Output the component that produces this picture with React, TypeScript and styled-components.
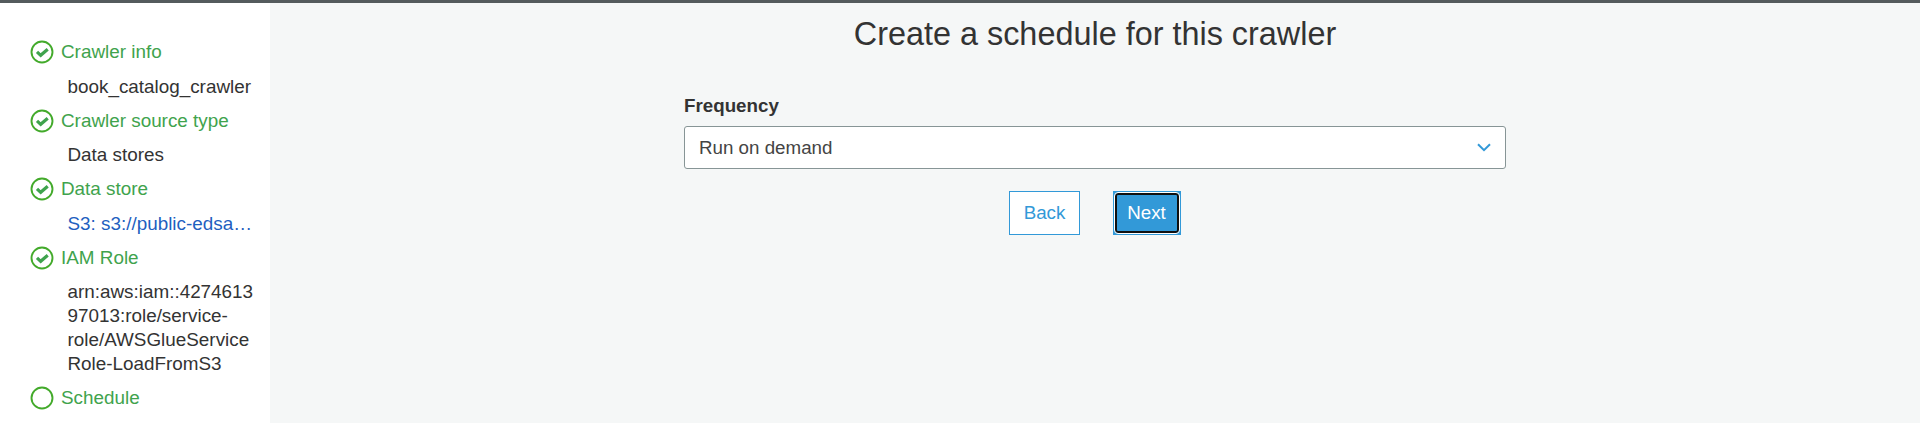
import React from 'react';
import styled, { createGlobalStyle, css } from 'styled-components';

const GlobalStyle = createGlobalStyle`
  * { box-sizing: border-box; }
  body {
    margin: 0;
    background: #f5f7f7;
    color: #333;
    font-family: "Liberation Sans", Arial, sans-serif;
    font-size: 18.75px;
    line-height: 24px;
  }
`;

const Page = styled.div`
  display: flex;
  height: 423px;
  overflow: hidden;
  border-top: 3px solid #545b5d;
`;

const Sidebar = styled.nav`
  flex: 0 0 270px;
  background: #fff;
  padding: 37.45px 0 0 30px;
  font-size: 18.86px;
`;

const Step = styled.section`
  margin-bottom: 10px;
`;

const StepTitle = styled.div`
  display: flex;
  align-items: center;
  gap: 7px;
  height: 24px;
  color: #3fa34d;
  white-space: nowrap;

  svg {
    flex: none;
  }
`;

const StepDetail = styled.div<{ $link?: boolean }>`
  width: 188px;
  margin: 10.4px 0 0 37.5px;
  color: ${({ $link }) => ($link ? '#1f5fbf' : '#333')};
  word-break: break-word;
  ${({ $link }) =>
    $link &&
    css`
      overflow: hidden;
      text-overflow: ellipsis;
      white-space: nowrap;
    `}
`;

const Main = styled.main`
  flex: 1;
  display: flex;
  flex-direction: column;
  align-items: center;
`;

const Heading = styled.h1`
  margin: 11px 0 0;
  font-size: 32.4px;
  line-height: 40px;
  font-weight: 400;
`;

const Field = styled.div`
  width: 822px;
  margin-top: 40px;
`;

const Label = styled.div`
  font-weight: 700;
  line-height: 24px;
`;

const Select = styled.div`
  display: flex;
  align-items: center;
  justify-content: space-between;
  height: 43px;
  margin-top: 8px;
  padding: 0 14px;
  background: #fff;
  border: 1px solid #879596;
  border-radius: 3px;
  color: #444;
`;

const Actions = styled.div`
  display: flex;
  gap: 33px;
  margin-top: 22px;
`;

const Button = styled.button`
  height: 44px;
  width: 71px;
  padding: 0 0 1px;
  border: 1px solid #3299d8;
  background: #fff;
  color: #3299d8;
  font: inherit;
`;

const PrimaryButton = styled(Button)`
  width: 68px;
  padding: 0;
  background: #3299d8;
  color: #fff;
`;

const FocusRing = styled.span`
  display: flex;
  align-items: center;
  justify-content: center;
  width: 66px;
  height: 42px;
  padding: 0 1px 1px 0;
  border: 1px solid #fff;
  border-radius: 4px;
  box-shadow: inset 0 0 0 2px #101010;
`;

const StepIcon = ({ done }: { done: boolean }) => (
  <svg width="24" height="24" viewBox="0 0 24 24" fill="none">
    <circle cx="12" cy="12" r="10.5" stroke="#43aa2b" strokeWidth="1.9" />
    {done && <path d="M7 11.8l3.7 3.5 7-6" stroke="#3fa34d" strokeWidth="3.2" />}
  </svg>
);

const steps = [
  { title: 'Crawler info', detail: 'book_catalog_crawler', done: true },
  { title: 'Crawler source type', detail: 'Data stores', done: true },
  { title: 'Data store', detail: 'S3: s3://public-edsa…', done: true, link: true },
  {
    title: 'IAM Role',
    detail: 'arn:aws:iam::427461397013:role/service-role/AWSGlueServiceRole-LoadFromS3',
    done: true,
  },
  { title: 'Schedule', done: false },
];

export default function App() {
  return (
    <>
      <GlobalStyle />
      <Page>
        <Sidebar>
          {steps.map((s) => (
            <Step key={s.title}>
              <StepTitle>
                <StepIcon done={s.done} />
                {s.title}
              </StepTitle>
              {s.detail && <StepDetail $link={s.link}>{s.detail}</StepDetail>}
            </Step>
          ))}
        </Sidebar>
        <Main>
          <Heading>Create a schedule for this crawler</Heading>
          <Field>
            <Label>Frequency</Label>
            <Select>
              Run on demand
              <svg width="14" height="9" viewBox="0 0 14 9" fill="none">
                <path d="M1 1.2l6 6 6-6" stroke="#3299d8" strokeWidth="2" />
              </svg>
            </Select>
          </Field>
          <Actions>
            <Button>Back</Button>
            <PrimaryButton>
              <FocusRing>Next</FocusRing>
            </PrimaryButton>
          </Actions>
        </Main>
      </Page>
    </>
  );
}
